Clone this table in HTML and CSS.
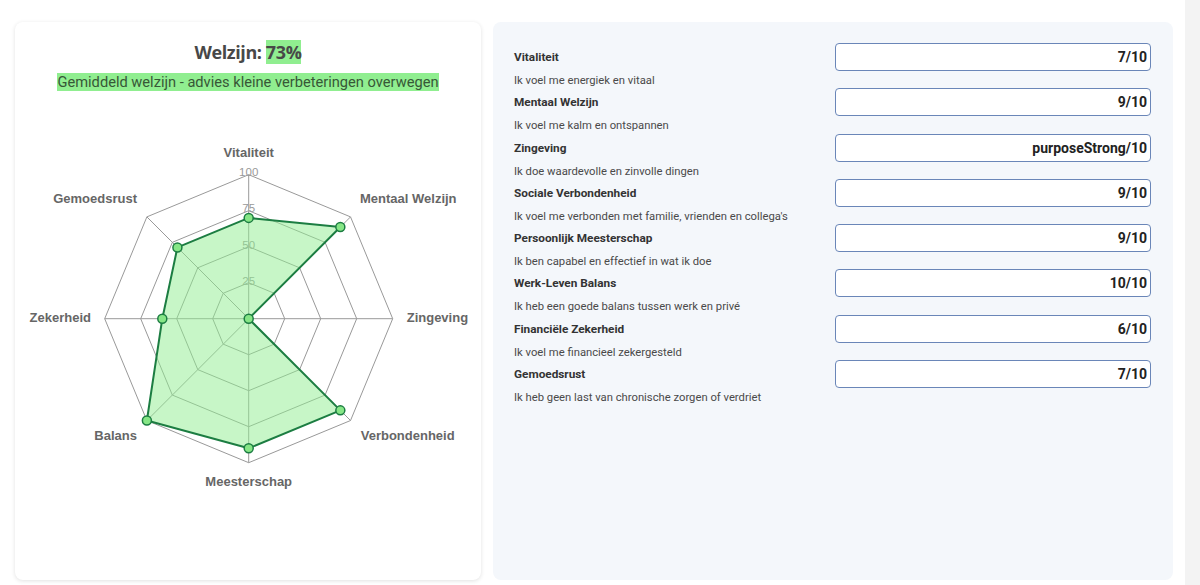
FILE: index.html
```html
<!DOCTYPE html>
<html lang="nl">
<head>
<meta charset="utf-8">
<title>Welzijn</title>
<link rel="stylesheet" href="styles.css">
</head>
<body>
<div class="page">
  <section class="card">
    <h2 class="title">Welzijn: <span class="hl">73%</span></h2>
    <p class="subtitle"><span class="hl">Gemiddeld welzijn - advies kleine verbeteringen overwegen</span></p>
    <svg class="radar" width="466" height="400" viewBox="0 0 466 400">
      <g transform="translate(233.7 218.7)">
        <g class="grid">
          <polygon points="0,-144 101.82,-101.82 144,0 101.82,101.82 0,144 -101.82,101.82 -144,0 -101.82,-101.82"/>
          <polygon points="0,-108 76.37,-76.37 108,0 76.37,76.37 0,108 -76.37,76.37 -108,0 -76.37,-76.37"/>
          <polygon points="0,-72 50.91,-50.91 72,0 50.91,50.91 0,72 -50.91,50.91 -72,0 -50.91,-50.91"/>
          <polygon points="0,-36 25.46,-25.46 36,0 25.46,25.46 0,36 -25.46,25.46 -36,0 -25.46,-25.46"/>
          <line x1="0" y1="0" x2="0" y2="-144"/>
          <line x1="0" y1="0" x2="101.82" y2="-101.82"/>
          <line x1="0" y1="0" x2="144" y2="0"/>
          <line x1="0" y1="0" x2="101.82" y2="101.82"/>
          <line x1="0" y1="0" x2="0" y2="144"/>
          <line x1="0" y1="0" x2="-101.82" y2="101.82"/>
          <line x1="0" y1="0" x2="-144" y2="0"/>
          <line x1="0" y1="0" x2="-101.82" y2="-101.82"/>
        </g>
        <g class="ticks">
          <text x="0" y="-146.5">100</text>
          <text x="0" y="-110.5">75</text>
          <text x="0" y="-74">50</text>
          <text x="0" y="-38">25</text>
        </g>
        <polygon class="area" points="0,-100.8 91.64,-91.64 0,0 91.64,91.64 0,129.6 -101.82,101.82 -86.4,0 -71.28,-71.28"/>
        <g class="dots">
          <circle cx="0" cy="-100.8" r="4.5"/>
          <circle cx="91.64" cy="-91.64" r="4.5"/>
          <circle cx="0" cy="0" r="4.5"/>
          <circle cx="91.64" cy="91.64" r="4.5"/>
          <circle cx="0" cy="129.6" r="4.5"/>
          <circle cx="-101.82" cy="101.82" r="4.5"/>
          <circle cx="-86.4" cy="0" r="4.5"/>
          <circle cx="-71.28" cy="-71.28" r="4.5"/>
        </g>
        <g class="axis-labels">
          <text x="0" y="-166.5" text-anchor="middle">Vitaliteit</text>
          <text x="111.3" y="-120.7" text-anchor="start">Mentaal Welzijn</text>
          <text x="158" y="-1.7" text-anchor="start">Zingeving</text>
          <text x="112" y="117.3" text-anchor="start">Verbondenheid</text>
          <text x="0" y="163.3" text-anchor="middle">Meesterschap</text>
          <text x="-111.7" y="117.3" text-anchor="end">Balans</text>
          <text x="-157.7" y="-1.7" text-anchor="end">Zekerheid</text>
          <text x="-111.7" y="-120.7" text-anchor="end">Gemoedsrust</text>
        </g>
      </g>
    </svg>
  </section>

  <section class="panel">
    <div class="row">
      <label class="label">Vitaliteit</label>
      <input class="score" type="text" value="7/10">
      <p class="desc">Ik voel me energiek en vitaal</p>
    </div>
    <div class="row">
      <label class="label">Mentaal Welzijn</label>
      <input class="score" type="text" value="9/10">
      <p class="desc">Ik voel me kalm en ontspannen</p>
    </div>
    <div class="row">
      <label class="label">Zingeving</label>
      <input class="score" type="text" value="purposeStrong/10">
      <p class="desc">Ik doe waardevolle en zinvolle dingen</p>
    </div>
    <div class="row">
      <label class="label">Sociale Verbondenheid</label>
      <input class="score" type="text" value="9/10">
      <p class="desc">Ik voel me verbonden met familie, vrienden en collega's</p>
    </div>
    <div class="row">
      <label class="label">Persoonlijk Meesterschap</label>
      <input class="score" type="text" value="9/10">
      <p class="desc">Ik ben capabel en effectief in wat ik doe</p>
    </div>
    <div class="row">
      <label class="label">Werk-Leven Balans</label>
      <input class="score" type="text" value="10/10">
      <p class="desc">Ik heb een goede balans tussen werk en privé</p>
    </div>
    <div class="row">
      <label class="label">Financiële Zekerheid</label>
      <input class="score" type="text" value="6/10">
      <p class="desc">Ik voel me financieel zekergesteld</p>
    </div>
    <div class="row">
      <label class="label">Gemoedsrust</label>
      <input class="score" type="text" value="7/10">
      <p class="desc">Ik heb geen last van chronische zorgen of verdriet</p>
    </div>
  </section>
</div>
</body>
</html>
```

FILE: styles.css
```css
* {
  box-sizing: border-box;
}

html, body {
  margin: 0;
  padding: 0;
}

body {
  background: #f3f3f3;
  font-family: Roboto, "Liberation Sans", Arial, sans-serif;
  color: #333;
}

.page {
  width: 1185px;
  height: 585px;
  background: #ffffff;
  padding: 22px 12px 5px 15px;
  display: grid;
  grid-template-columns: 466px 680px;
  column-gap: 12px;
}

.card {
  background: #ffffff;
  border-radius: 8px;
  box-shadow: 0 1px 4px rgba(0, 0, 0, 0.12);
  padding-top: 17px;
  text-align: center;
  overflow: hidden;
}

.title {
  margin: 0;
  font-family: "Open Sans", "Liberation Sans", sans-serif;
  font-weight: 700;
  font-size: 18px;
  letter-spacing: -0.4px;
  line-height: 26px;
  color: #484848;
}

.hl {
  background: #90ee90;
}

.subtitle {
  margin: 8px 0 0;
  font-family: Roboto, "Liberation Sans", sans-serif;
  font-size: 14.65px;
  line-height: 18px;
  color: #375737;
}

.radar {
  display: block;
  margin-top: 9px;
}

.grid polygon,
.grid line {
  fill: none;
  stroke: #999999;
  stroke-width: 1;
}

.ticks text {
  font-family: "Liberation Sans", Arial, sans-serif;
  font-size: 11.5px;
  fill: #999999;
  text-anchor: middle;
  dominant-baseline: central;
}

.area {
  fill: rgba(144, 238, 144, 0.5);
  stroke: #1c7d42;
  stroke-width: 2;
  stroke-linejoin: round;
}

.dots circle {
  fill: #86e686;
  stroke: #1c7d42;
  stroke-width: 1.5;
}

.axis-labels text {
  font-family: "Liberation Sans", Arial, sans-serif;
  font-weight: 700;
  font-size: 13px;
  fill: #666;
  dominant-baseline: central;
}

.panel {
  background: #f4f7fb;
  border-radius: 8px;
  padding: 21px 22px 21px 21px;
}

.row {
  display: grid;
  grid-template-columns: 1fr 316px;
  column-gap: 5px;
  align-items: center;
}

.label {
  font-size: 11.8px;
  font-weight: 700;
  color: #333;
}

.score {
  height: 28px;
  width: 316px;
  margin: 0;
  border: 1px solid #6a86b8;
  border-radius: 4px;
  background: #ffffff;
  padding: 0 3px;
  text-align: right;
  font-family: Roboto, "Liberation Sans", sans-serif;
  font-weight: 700;
  font-size: 14px;
  color: #222;
}

.desc {
  grid-column: 1 / 2;
  margin: 0;
  padding-top: 2px;
  font-size: 11.25px;
  line-height: 15.3px;
  color: #4a4a4a;
}
```
